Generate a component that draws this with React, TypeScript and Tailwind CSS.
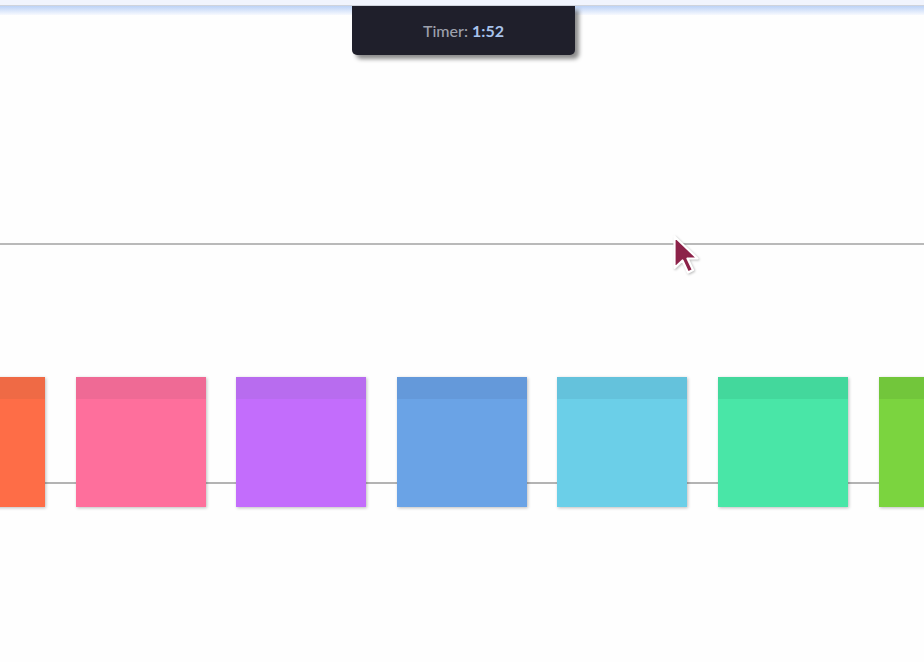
import React from 'react'

// sticky notes along the lower line
const notes = [
  { body: 'bg-[#fe6d47]', head: 'bg-[#ef6a45]' },
  { body: 'bg-[#fe6f9c]', head: 'bg-[#ef6a95]' },
  { body: 'bg-[#c36dfc]', head: 'bg-[#b86cef]' },
  { body: 'bg-[#6aa3e6]', head: 'bg-[#6499da]' },
  { body: 'bg-[#6bcfe8]', head: 'bg-[#64c2dc]' },
  { body: 'bg-[#49e6a7]', head: 'bg-[#43d89c]' },
  { body: 'bg-[#7bd43f]', head: 'bg-[#72c63b]' },
]

function Cursor() {
  return (
    <svg width="30" height="44" viewBox="0 0 30 44" className="absolute left-[672px] top-[234px] drop-shadow-[1px_1px_1px_rgba(0,0,0,0.25)]">
      <path
        d="M2.5 2.5 L2.5 34 L10.5 26.5 L16 38.5 L21 36 L15.5 24.5 L25.5 24.5 Z"
        fill="#8c2249"
        stroke="#ffffff"
        strokeWidth="2.2"
        strokeLinejoin="round"
      />
    </svg>
  )
}

export default function App() {
  return (
    <div className="relative w-[924px] h-[662px] overflow-hidden bg-[#fefefe] flex flex-col" style={{ fontFamily: 'Lato, "Noto Sans", sans-serif' }}>
      {/* top toolbar edge */}
      <div className="shrink-0">
        <div className="h-[6px] bg-[#f1f4fd] border-b border-[#cfd3dc]" />
        <div className="h-[9px] bg-gradient-to-b from-[#bcd2f6] to-[#f7f9fe]" />
      </div>

      {/* upper divider */}
      <div className="mt-[228px] h-[2px] bg-[#b9b9b9] shrink-0" />

      {/* notes row on connector */}
      <div className="relative mt-[132px] ml-[-85px] flex gap-[30.6px] shrink-0">
        <div className="absolute inset-x-0 top-[105px] h-[2px] bg-[#b3b3b3]" />
        {notes.map((n, i) => (
          <div key={i} className={`relative w-[130px] h-[130px] shrink-0 ${n.body} shadow-[1px_1px_3px_rgba(0,0,0,0.25)] flex flex-col`}>
            <div className={`h-[22px] ${n.head}`} />
          </div>
        ))}
      </div>

      {/* timer panel */}
      <div className="absolute left-[352px] top-[6px] w-[223px] h-[49px] rounded-b-[5px] bg-[#1f1f2b] shadow-[4px_4px_4px_rgba(0,0,0,0.45)] flex flex-col items-center">
        <div className="absolute left-[40px] -top-[6px] w-[143px] h-[6px] bg-[#f1f4fd] border-b border-[#cfd3dc]" />
        <div className="mt-[14px] text-[16px] leading-[22px] font-medium text-[#9da0ab]">
          Timer: <span className="font-bold text-[#a8c3ec]">1:52</span>
        </div>
      </div>

      <Cursor />
    </div>
  )
}
